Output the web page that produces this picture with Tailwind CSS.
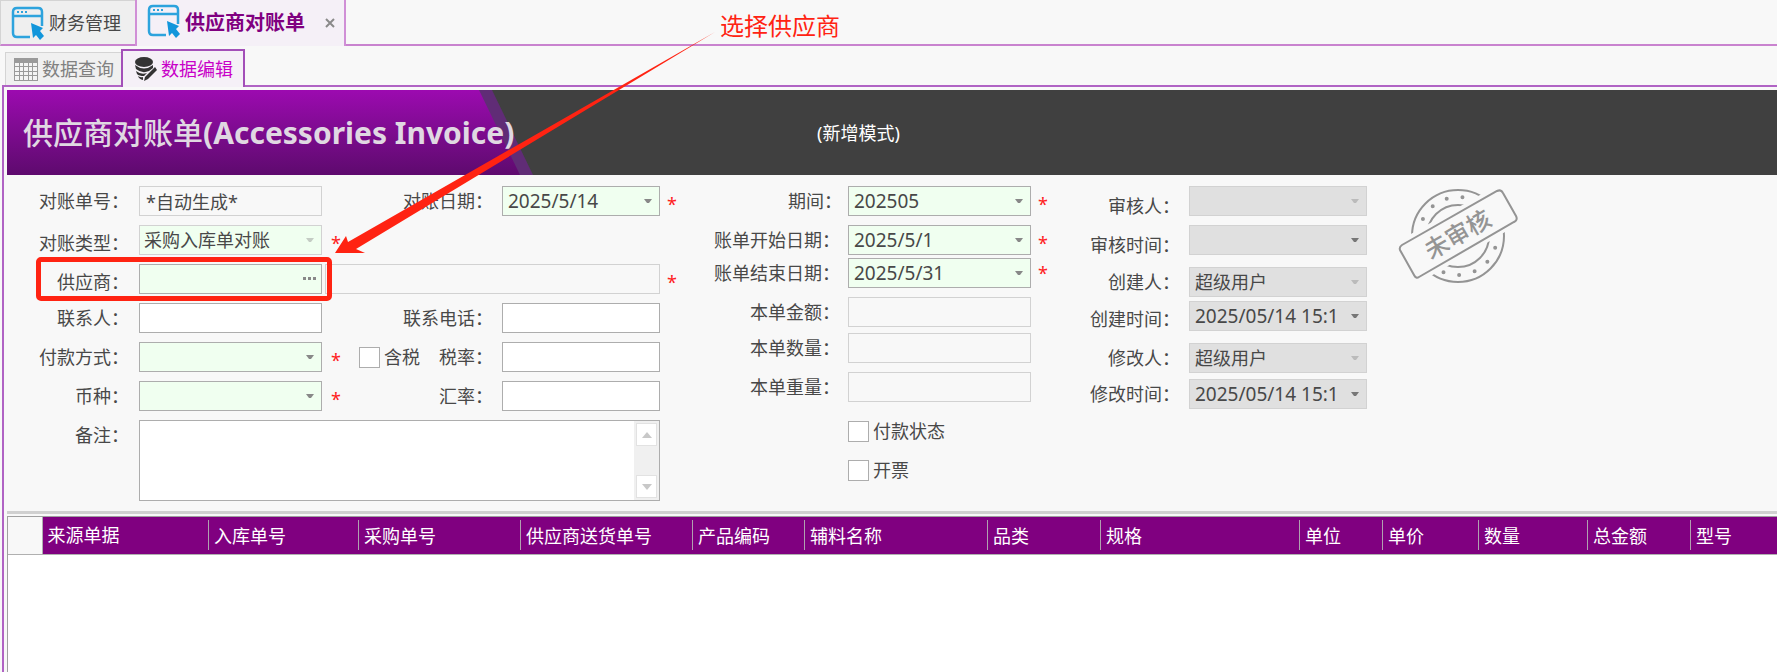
<!DOCTYPE html>
<html lang="zh-CN">
<head>
  <meta charset="UTF-8">
  <title>供应商对账单</title>
  <script src="https://cdn.jsdelivr.net/npm/@tailwindcss/browser@4"></script>
</head>
<body class="relative min-h-screen flex flex-col overflow-x-hidden bg-[#f8f8f8] text-[#484848] text-lg leading-6 font-['Noto_Sans','Noto_Sans_CJK_SC',sans-serif]">

  <svg class="hidden">
    <symbol id="window" viewBox="0 0 34 34">
      <path d="M19 31H6Q2 31 2 27V6Q2 2 6 2H27Q31 2 31 6V20M2 10H31" fill="none" stroke="#2da3dd" stroke-width="2.5"/>
      <path d="M6 6h2M10 6h2M14 6h2" stroke="#2da3dd" stroke-width="2"/>
      <path d="M20 17L32 22L29 25L33 30L29 34L25 29L22 32Z" fill="#1296db"/>
    </symbol>
    <symbol id="caret" viewBox="0 0 8 5">
      <path d="M0 0H8L5 4H3Z" fill="currentColor"/>
    </symbol>
  </svg>

  <!-- Pestañas principales -->
  <nav class="flex h-[46px] shrink-0">
    <button class="flex w-[135px] items-center border-t border-l border-[#d4d4d4] border-b-2 border-b-[#c983cf] bg-[#efefef] pl-[10px]">
      <svg class="mr-1 h-[34px] w-[34px]"><use href="#window"/></svg>财务管理
    </button>
    <div class="flex w-[211px] items-center border-x-2 border-[#d08fd6] bg-[#f5f0f7] pl-[10px]">
      <button class="flex items-center text-[20px] font-bold text-[#800080]">
        <svg class="mr-1 mb-1 h-[34px] w-[34px]"><use href="#window"/></svg>供应商对账单
      </button>
      <button aria-label="关闭" class="ml-5">
        <svg class="h-[10px] w-[10px]" viewBox="0 0 10 10"><path d="M1 1L9 9M9 1L1 9" stroke="#8a8a8a" stroke-width="2"/></svg>
      </button>
    </div>
    <div class="grow border-b-2 border-[#c983cf]"></div>
  </nav>

  <!-- Subpestañas -->
  <nav class="relative z-10 mt-[3px] -mb-[2px] ml-[5px] flex h-[38px] shrink-0 items-end">
    <button class="mb-[2px] flex h-[33px] w-[116px] items-center border-t border-l border-[#d4d4d4] bg-[#f0f0f0] pl-2 text-[#808080]">
      <svg class="mr-1 h-[23px] w-6" viewBox="0 0 24 23">
        <path d="M0 0H24V23H0Z" fill="#9a9a9a"/>
        <path d="M1 5h4v3H1zM6 5h3v3H6zM10 5h4v3h-4zM15 5h3v3h-3zM19 5h4v3h-4zM1 9h4v4H1zM6 9h3v4H6zM10 9h4v4h-4zM15 9h3v4h-3zM19 9h4v4h-4zM1 14h4v3H1zM6 14h3v3H6zM10 14h4v3h-4zM15 14h3v3h-3zM19 14h4v3h-4zM1 18h4v4H1zM6 18h3v4H6zM10 18h4v4h-4zM15 18h3v4h-3zM19 18h4v4h-4z" fill="#f4f4f4"/>
      </svg>数据查询
    </button>
    <button class="flex h-[38px] w-[124px] items-center border-x-2 border-t-2 border-[#a34fb8] bg-[#f5f0f7] pl-3 text-[#c800c8]">
      <svg class="mr-1 h-6 w-[22px]" viewBox="0 0 22 24" fill="#333">
        <ellipse cx="9" cy="5" rx="9" ry="5"/>
        <path d="M0 8Q9 15 18 8V11L14 14Q7 17 1 12ZM1 14Q6 18 12 16L9 19Q4 19 2 17ZM3 19Q6 21 8 20L8 23Q4 22 3 19Z"/>
        <path d="M20 10L22 13L13 22L9 24L10 20Z"/>
      </svg>数据编辑
    </button>
  </nav>

  <main class="ml-[2px] flex grow flex-col border-t-2 border-l-2 border-[#b063c4] pt-[3px] pl-[3px]">
    <!-- Encabezado -->
    <header class="relative flex h-[85px] shrink-0 items-center bg-[#404040]">
      <div class="absolute inset-y-0 left-0 w-[526px] bg-[#602c76] [clip-path:polygon(0_0,485px_0,526px_100%,0_100%)]"></div>
      <div class="absolute inset-y-0 left-0 w-[513px] bg-linear-to-b from-[#9c0ab0] to-[#5e0a6e] [clip-path:polygon(0_0,472px_0,513px_100%,0_100%)]"></div>
      <h1 class="relative w-[810px] pl-4 text-[30px] font-bold whitespace-nowrap text-[#e0d8e2]"><span class="font-medium">供应商对账单</span>(Accessories Invoice)</h1>
      <span class="text-white">(新增模式)</span>
    </header>

    <form class="flex h-[336px] shrink-0 items-start pt-[11px]">
      <!-- Datos del proveedor -->
      <div class="flex w-[677px] shrink-0 flex-col gap-[9px]">
        <div class="flex h-[30px] items-center">
          <label for="no" class="mr-[10px] w-[122px] text-right">对账单号：</label>
          <input id="no" value="*自动生成*" readonly class="h-[30px] w-[183px] border border-[#d2d2d2] px-[6px] outline-none">
          <label for="fecha" class="mr-[9px] ml-7 w-[143px] text-right">对账日期：</label>
          <div class="relative">
            <select id="fecha" class="h-[30px] w-[158px] appearance-none border border-[#adadad] bg-[#f0fff0] pl-[5px] text-[19px]"><option>2025/5/14</option></select>
            <svg class="pointer-events-none absolute top-[13px] right-2 h-[5px] w-2 text-[#888]"><use href="#caret"/></svg>
          </div>
          <span class="w-6 pt-[6px] text-center text-[#ff2020]">*</span>
        </div>
        <div class="flex h-[30px] items-center">
          <label for="tipo" class="mr-[10px] w-[122px] self-end text-right">对账类型：</label>
          <div class="relative">
            <select id="tipo" class="h-[30px] w-[183px] appearance-none border border-[#d2d2d2] bg-[#f0fff0] pl-1"><option>采购入库单对账</option></select>
            <svg class="pointer-events-none absolute top-[13px] right-2 h-[5px] w-2 text-[#c4ccc4]"><use href="#caret"/></svg>
          </div>
          <span class="w-7 pt-[6px] text-center text-[#ff2020]">*</span>
        </div>
        <div class="relative flex h-[30px] items-center">
          <label for="proveedor" class="mr-[10px] w-[122px] self-end text-right">供应商：</label>
          <div class="relative">
            <input id="proveedor" class="h-[30px] w-[183px] border border-[#adadad] bg-[#f0fff0] px-[6px] outline-none">
            <button type="button" aria-label="选择" class="absolute top-[13px] right-[6px] flex gap-[2px]">
              <i class="h-[3px] w-[3px] bg-[#888]"></i><i class="h-[3px] w-[3px] bg-[#888]"></i><i class="h-[3px] w-[3px] bg-[#888]"></i>
            </button>
          </div>
          <input aria-label="供应商名称" readonly class="ml-[3px] h-[30px] w-[335px] border border-[#d2d2d2] outline-none">
          <span class="w-6 pt-[6px] text-center text-[#ff2020]">*</span>
          <div class="pointer-events-none absolute -top-[7px] left-[29px] h-[44px] w-[296px] rounded-[5px] border-5 border-[#ff2312]"></div>
        </div>
        <div class="flex h-[30px] items-center">
          <label for="contacto" class="mr-[10px] w-[122px] text-right">联系人：</label>
          <input id="contacto" class="h-[30px] w-[183px] border border-[#adadad] bg-white px-[6px] outline-none">
          <label for="tel" class="mr-[9px] ml-7 w-[143px] text-right">联系电话：</label>
          <input id="tel" class="h-[30px] w-[158px] border border-[#adadad] bg-white px-[6px] outline-none">
        </div>
        <div class="flex h-[30px] items-center">
          <label for="pago" class="mr-[10px] w-[122px] text-right">付款方式：</label>
          <div class="relative">
            <select id="pago" class="h-[30px] w-[183px] appearance-none border border-[#adadad] bg-[#f0fff0] pl-1"><option></option></select>
            <svg class="pointer-events-none absolute top-[13px] right-2 h-[5px] w-2 text-[#888]"><use href="#caret"/></svg>
          </div>
          <span class="w-7 pt-[6px] text-center text-[#ff2020]">*</span>
          <input id="iva" type="checkbox" class="ml-[9px] h-[21px] w-[21px] appearance-none border border-[#adadad] bg-white">
          <label for="iva" class="ml-1">含税</label>
          <label for="tasa" class="mr-[9px] grow text-right">税率：</label>
          <input id="tasa" class="mr-6 h-[30px] w-[158px] border border-[#adadad] bg-white px-[6px] outline-none">
        </div>
        <div class="flex h-[30px] items-center">
          <label for="moneda" class="mr-[10px] w-[122px] text-right">币种：</label>
          <div class="relative">
            <select id="moneda" class="h-[30px] w-[183px] appearance-none border border-[#adadad] bg-[#f0fff0] pl-1"><option></option></select>
            <svg class="pointer-events-none absolute top-[13px] right-2 h-[5px] w-2 text-[#888]"><use href="#caret"/></svg>
          </div>
          <span class="w-7 pt-[6px] text-center text-[#ff2020]">*</span>
          <label for="cambio" class="mr-[9px] w-[143px] text-right">汇率：</label>
          <input id="cambio" class="h-[30px] w-[158px] border border-[#adadad] bg-white px-[6px] outline-none">
        </div>
        <div class="flex">
          <label for="nota" class="mt-[3px] mr-[10px] w-[122px] text-right">备注：</label>
          <div class="relative">
            <textarea id="nota" class="block h-[81px] w-[521px] resize-none border border-[#adadad] bg-white px-[6px] outline-none"></textarea>
            <div class="absolute inset-y-px right-px flex w-[25px] flex-col items-center justify-between bg-[#f0f0f0] py-[2px] text-[#c8c8c8]">
              <button type="button" aria-label="向上" class="flex h-[23px] w-[21px] items-center justify-center border border-[#e2e2e2] bg-white"><svg class="h-[6px] w-[10px]" viewBox="0 0 10 6"><path d="M0 6L5 0L10 6Z" fill="currentColor"/></svg></button>
              <button type="button" aria-label="向下" class="flex h-[23px] w-[21px] items-center justify-center border border-[#e2e2e2] bg-white"><svg class="h-[6px] w-[10px]" viewBox="0 0 10 6"><path d="M0 0L5 6L10 0Z" fill="currentColor"/></svg></button>
            </div>
          </div>
        </div>
      </div>

      <!-- Periodo e importes -->
      <div class="w-[371px] shrink-0">
        <div class="flex h-[30px] items-center">
          <label for="periodo" class="mr-[6px] w-[158px] text-right">期间：</label>
          <div class="relative">
            <select id="periodo" class="h-[30px] w-[183px] appearance-none border border-[#adadad] bg-[#f0fff0] pl-[5px] text-[19px]"><option>202505</option></select>
            <svg class="pointer-events-none absolute top-[13px] right-2 h-[5px] w-2 text-[#888]"><use href="#caret"/></svg>
          </div>
          <span class="w-6 pt-[6px] text-center text-[#ff2020]">*</span>
        </div>
        <div class="mt-[9px] flex h-[30px] items-center">
          <label for="inicio" class="mr-2 w-[156px] text-right">账单开始日期：</label>
          <div class="relative">
            <select id="inicio" class="h-[30px] w-[183px] appearance-none border border-[#adadad] bg-[#f0fff0] pl-[5px] text-[19px]"><option>2025/5/1</option></select>
            <svg class="pointer-events-none absolute top-[13px] right-2 h-[5px] w-2 text-[#888]"><use href="#caret"/></svg>
          </div>
          <span class="w-6 pt-[6px] text-center text-[#ff2020]">*</span>
        </div>
        <div class="mt-[3px] flex h-[30px] items-center">
          <label for="fin" class="mr-2 w-[156px] text-right">账单结束日期：</label>
          <div class="relative">
            <select id="fin" class="h-[30px] w-[183px] appearance-none border border-[#adadad] bg-[#f0fff0] pl-[5px] text-[19px]"><option>2025/5/31</option></select>
            <svg class="pointer-events-none absolute top-[13px] right-2 h-[5px] w-2 text-[#888]"><use href="#caret"/></svg>
          </div>
          <span class="w-6 text-center text-[#ff2020]">*</span>
        </div>
        <div class="mt-[9px] flex h-[30px] items-center">
          <label for="importe" class="mr-2 w-[156px] text-right">本单金额：</label>
          <input id="importe" readonly class="h-[30px] w-[183px] border border-[#d2d2d2] outline-none">
        </div>
        <div class="mt-[6px] flex h-[30px] items-center">
          <label for="cantidad" class="mr-2 w-[156px] text-right">本单数量：</label>
          <input id="cantidad" readonly class="h-[30px] w-[183px] border border-[#d2d2d2] outline-none">
        </div>
        <div class="mt-[9px] flex h-[30px] items-center">
          <label for="peso" class="mr-2 w-[156px] text-right">本单重量：</label>
          <input id="peso" readonly class="h-[30px] w-[183px] border border-[#d2d2d2] outline-none">
        </div>
        <div class="mt-[14px] ml-[164px] flex h-[30px] items-center">
          <input id="pagado" type="checkbox" class="h-[21px] w-[21px] appearance-none border border-[#adadad] bg-white">
          <label for="pagado" class="ml-1">付款状态</label>
        </div>
        <div class="mt-[9px] ml-[164px] flex h-[30px] items-center">
          <input id="factura" type="checkbox" class="h-[21px] w-[21px] appearance-none border border-[#adadad] bg-white">
          <label for="factura" class="ml-1">开票</label>
        </div>
      </div>

      <!-- Auditoría -->
      <div class="w-[312px] shrink-0">
        <div class="flex h-[30px] items-center">
          <label for="revisor" class="mr-[9px] w-[125px] self-end text-right leading-5">审核人：</label>
          <div class="relative">
            <select id="revisor" class="h-[30px] w-[178px] appearance-none border border-[#d2d2d2] bg-[#e0e0e0] pl-[5px]"><option></option></select>
            <svg class="pointer-events-none absolute top-[13px] right-2 h-[5px] w-2 text-[#bbb]"><use href="#caret"/></svg>
          </div>
        </div>
        <div class="mt-[9px] flex h-[30px] items-center">
          <label for="revisado" class="mr-[9px] w-[125px] self-end text-right leading-5">审核时间：</label>
          <div class="relative">
            <select id="revisado" class="h-[30px] w-[178px] appearance-none border border-[#d2d2d2] bg-[#e0e0e0] pl-[5px]"><option></option></select>
            <svg class="pointer-events-none absolute top-[13px] right-2 h-[5px] w-2 text-[#777]"><use href="#caret"/></svg>
          </div>
        </div>
        <div class="mt-3 flex h-[30px] items-center">
          <label for="creador" class="mr-[9px] w-[125px] text-right">创建人：</label>
          <div class="relative">
            <select id="creador" class="h-[30px] w-[178px] appearance-none border border-[#d2d2d2] bg-[#e0e0e0] pl-[5px]"><option>超级用户</option></select>
            <svg class="pointer-events-none absolute top-[13px] right-2 h-[5px] w-2 text-[#bbb]"><use href="#caret"/></svg>
          </div>
        </div>
        <div class="mt-1 flex h-[30px] items-center">
          <label for="creado" class="mr-[9px] w-[125px] self-end text-right">创建时间：</label>
          <div class="relative">
            <select id="creado" class="h-[30px] w-[178px] appearance-none border border-[#d2d2d2] bg-[#e0e0e0] pr-7 pl-[5px] text-[19px]"><option>2025/05/14 15:15</option></select>
            <svg class="pointer-events-none absolute top-[13px] right-2 h-[5px] w-2 text-[#777]"><use href="#caret"/></svg>
          </div>
        </div>
        <div class="mt-3 flex h-[30px] items-center">
          <label for="editor" class="mr-[9px] w-[125px] text-right">修改人：</label>
          <div class="relative">
            <select id="editor" class="h-[30px] w-[178px] appearance-none border border-[#d2d2d2] bg-[#e0e0e0] pl-[5px]"><option>超级用户</option></select>
            <svg class="pointer-events-none absolute top-[13px] right-2 h-[5px] w-2 text-[#bbb]"><use href="#caret"/></svg>
          </div>
        </div>
        <div class="mt-[6px] flex h-[30px] items-center">
          <label for="editado" class="mr-[9px] w-[125px] text-right">修改时间：</label>
          <div class="relative">
            <select id="editado" class="h-[30px] w-[178px] appearance-none border border-[#d2d2d2] bg-[#e0e0e0] pr-7 pl-[5px] text-[19px]"><option>2025/05/14 15:15</option></select>
            <svg class="pointer-events-none absolute top-[13px] right-2 h-[5px] w-2 text-[#777]"><use href="#caret"/></svg>
          </div>
        </div>
      </div>

      <!-- Sello -->
      <svg class="mt-px ml-[31px] h-[97px] w-[122px] shrink-0" viewBox="0 0 122 97" fill="none" stroke="#949494" stroke-width="2">
        <circle cx="60" cy="49" r="46"/>
        <circle cx="60" cy="49" r="31"/>
        <circle cx="60" cy="49" r="39" stroke-width="4" stroke-linecap="round" stroke-dasharray="0 16" stroke-dashoffset="4"/>
        <path d="M4 56L98 3Q102 1 105 5L119 29Q121 33 117 35L21 92Q18 94 15 90L1 63Q0 58 4 56Z" fill="#f8f8f8" stroke="#f8f8f8" stroke-width="7"/>
        <path d="M4 58L99 4Q103 2 105 6L118 29Q120 33 116 35L21 90Q18 92 16 88L2 63Q1 60 4 58Z"/>
        <text x="60" y="56" transform="rotate(-30 60 48)" text-anchor="middle" font-size="24" font-weight="500" fill="#949494" stroke="none">未审核</text>
      </svg>
    </form>

    <!-- Detalle -->
    <section class="flex grow flex-col border-t-[3px] border-[#d0d0d0] pt-[2px]">
      <div class="grow border-t border-l border-[#a0a0a0] bg-white">
        <table class="w-full table-fixed text-left text-white">
          <colgroup>
            <col class="w-[34px]"><col class="w-[166px]"><col class="w-[150px]"><col class="w-[162px]"><col class="w-[172px]"><col class="w-[112px]"><col class="w-[183px]"><col class="w-[113px]"><col class="w-[199px]"><col class="w-[83px]"><col class="w-[96px]"><col class="w-[109px]"><col class="w-[103px]"><col>
          </colgroup>
          <thead>
            <tr class="h-[37px] border-b border-[#b0b0b0] bg-[#800080]">
              <th class="border-r border-[#b0b0b0] bg-[#f8f8f8]"></th>
              <th class="pl-[5px] font-normal leading-8">来源单据</th>
              <th class="font-normal"><div class="h-[30px] border-l border-[#b0a0b0] pl-[5px] leading-8">入库单号</div></th>
              <th class="font-normal"><div class="h-[30px] border-l border-[#b0a0b0] pl-[5px] leading-8">采购单号</div></th>
              <th class="font-normal"><div class="h-[30px] border-l border-[#b0a0b0] pl-[5px] leading-8">供应商送货单号</div></th>
              <th class="font-normal"><div class="h-[30px] border-l border-[#b0a0b0] pl-[5px] leading-8">产品编码</div></th>
              <th class="font-normal"><div class="h-[30px] border-l border-[#b0a0b0] pl-[5px] leading-8">辅料名称</div></th>
              <th class="font-normal"><div class="h-[30px] border-l border-[#b0a0b0] pl-[5px] leading-8">品类</div></th>
              <th class="font-normal"><div class="h-[30px] border-l border-[#b0a0b0] pl-[5px] leading-8">规格</div></th>
              <th class="font-normal"><div class="h-[30px] border-l border-[#b0a0b0] pl-[5px] leading-8">单位</div></th>
              <th class="font-normal"><div class="h-[30px] border-l border-[#b0a0b0] pl-[5px] leading-8">单价</div></th>
              <th class="font-normal"><div class="h-[30px] border-l border-[#b0a0b0] pl-[5px] leading-8">数量</div></th>
              <th class="font-normal"><div class="h-[30px] border-l border-[#b0a0b0] pl-[5px] leading-8">总金额</div></th>
              <th class="font-normal"><div class="h-[30px] border-l border-[#b0a0b0] pl-[5px] leading-8">型号</div></th>
            </tr>
          </thead>
        </table>
      </div>
    </section>
  </main>

  <!-- Anotación sobre la pantalla -->
  <p class="absolute top-[10px] left-[720px] z-20 text-2xl leading-8 text-[#ff2312]">选择供应商</p>
  <svg class="pointer-events-none absolute top-[30px] left-[330px] z-20 h-[226px] w-[390px]" viewBox="0 0 390 226">
    <path d="M385 2L26 219L35 223L5 223L16 206L18 212Z" fill="#ff2312"/>
  </svg>
</body>
</html>
